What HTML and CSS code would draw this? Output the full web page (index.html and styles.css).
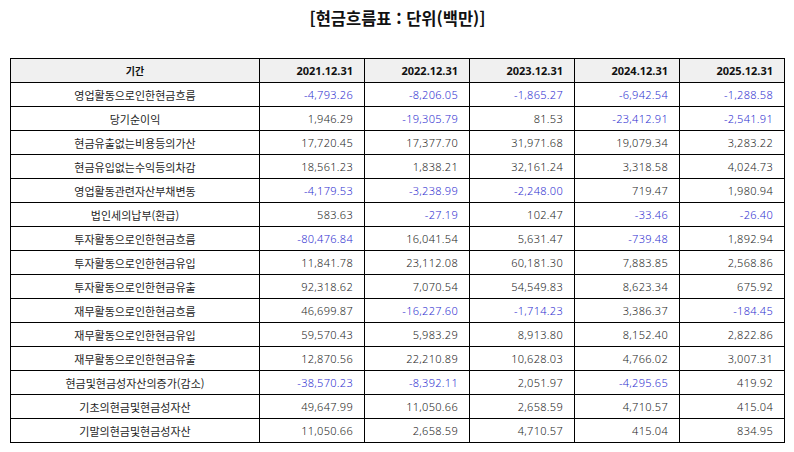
FILE: index.html
```html
<!DOCTYPE html>
<html lang="ko">
<head>
<meta charset="utf-8">
<title>현금흐름표</title>
<link rel="stylesheet" href="styles.css">
</head>
<body>
<div class="page">
  <h1 class="title">[현금흐름표 : 단위(백만)]</h1>
  <table class="cf">
    <colgroup>
      <col class="c-label"><col class="c-num"><col class="c-num"><col class="c-num"><col class="c-num"><col class="c-num">
    </colgroup>
    <thead>
      <tr><th class="lbl">기간</th><th>2021.12.31</th><th>2022.12.31</th><th>2023.12.31</th><th>2024.12.31</th><th>2025.12.31</th></tr>
    </thead>
    <tbody>
      <tr><td class="lbl">영업활동으로인한현금흐름</td><td class="neg">-4,793.26</td><td class="neg">-8,206.05</td><td class="neg">-1,865.27</td><td class="neg">-6,942.54</td><td class="neg">-1,288.58</td></tr>
      <tr><td class="lbl">당기순이익</td><td>1,946.29</td><td class="neg">-19,305.79</td><td>81.53</td><td class="neg">-23,412.91</td><td class="neg">-2,541.91</td></tr>
      <tr><td class="lbl">현금유출없는비용등의가산</td><td>17,720.45</td><td>17,377.70</td><td>31,971.68</td><td>19,079.34</td><td>3,283.22</td></tr>
      <tr><td class="lbl">현금유입없는수익등의차감</td><td>18,561.23</td><td>1,838.21</td><td>32,161.24</td><td>3,318.58</td><td>4,024.73</td></tr>
      <tr><td class="lbl">영업활동관련자산부채변동</td><td class="neg">-4,179.53</td><td class="neg">-3,238.99</td><td class="neg">-2,248.00</td><td>719.47</td><td>1,980.94</td></tr>
      <tr><td class="lbl">법인세의납부(환급)</td><td>583.63</td><td class="neg">-27.19</td><td>102.47</td><td class="neg">-33.46</td><td class="neg">-26.40</td></tr>
      <tr><td class="lbl">투자활동으로인한현금흐름</td><td class="neg">-80,476.84</td><td>16,041.54</td><td>5,631.47</td><td class="neg">-739.48</td><td>1,892.94</td></tr>
      <tr><td class="lbl">투자활동으로인한현금유입</td><td>11,841.78</td><td>23,112.08</td><td>60,181.30</td><td>7,883.85</td><td>2,568.86</td></tr>
      <tr><td class="lbl">투자활동으로인한현금유출</td><td>92,318.62</td><td>7,070.54</td><td>54,549.83</td><td>8,623.34</td><td>675.92</td></tr>
      <tr><td class="lbl">재무활동으로인한현금흐름</td><td>46,699.87</td><td class="neg">-16,227.60</td><td class="neg">-1,714.23</td><td>3,386.37</td><td class="neg">-184.45</td></tr>
      <tr><td class="lbl">재무활동으로인한현금유입</td><td>59,570.43</td><td>5,983.29</td><td>8,913.80</td><td>8,152.40</td><td>2,822.86</td></tr>
      <tr><td class="lbl">재무활동으로인한현금유출</td><td>12,870.56</td><td>22,210.89</td><td>10,628.03</td><td>4,766.02</td><td>3,007.31</td></tr>
      <tr><td class="lbl">현금및현금성자산의증가(감소)</td><td class="neg">-38,570.23</td><td class="neg">-8,392.11</td><td>2,051.97</td><td class="neg">-4,295.65</td><td>419.92</td></tr>
      <tr><td class="lbl">기초의현금및현금성자산</td><td>49,647.99</td><td>11,050.66</td><td>2,658.59</td><td>4,710.57</td><td>415.04</td></tr>
      <tr><td class="lbl">기말의현금및현금성자산</td><td>11,050.66</td><td>2,658.59</td><td>4,710.57</td><td>415.04</td><td>834.95</td></tr>
    </tbody>
  </table>
</div>
</body>
</html>
```

FILE: styles.css
```css
html, body {
  margin: 0;
  padding: 0;
  background: #ffffff;
}

.page {
  padding: 8px 0 0 10px;
  font-family: "Noto Sans", "Noto Sans CJK KR", sans-serif;
  color: #1e1e1e;
}

.title {
  margin: 0 0 30px 0;
  width: 775px;
  height: 20px;
  line-height: 20px;
  text-align: center;
  font-family: "Noto Sans CJK KR", sans-serif;
  font-size: 16.5px;
  font-weight: 700;
  color: #111111;
}

.cf {
  border-collapse: collapse;
  table-layout: fixed;
  width: 775px;
}

.c-label { width: 249px; }
.c-num { width: 105px; }

.cf th,
.cf td {
  border: 1px solid #000000;
  height: 24px;
  padding: 0 11px 0 0;
  box-sizing: border-box;
  text-align: right;
  vertical-align: middle;
  font-size: 11px;
  font-weight: 300;
  line-height: 14px;
  white-space: nowrap;
  letter-spacing: 0.3px;
}

.cf th {
  background: #f0f0f0;
  font-weight: 700;
  color: #111111;
  letter-spacing: 0;
}

.cf .lbl {
  text-align: center;
  padding: 0;
  font-family: "Noto Sans CJK KR", sans-serif;
  font-size: 11px;
  font-weight: 400;
  letter-spacing: 0;
}

.cf th.lbl {
  font-size: 10px;
  font-weight: 700;
}

.cf td.neg {
  color: #2f2fd0;
}
```
